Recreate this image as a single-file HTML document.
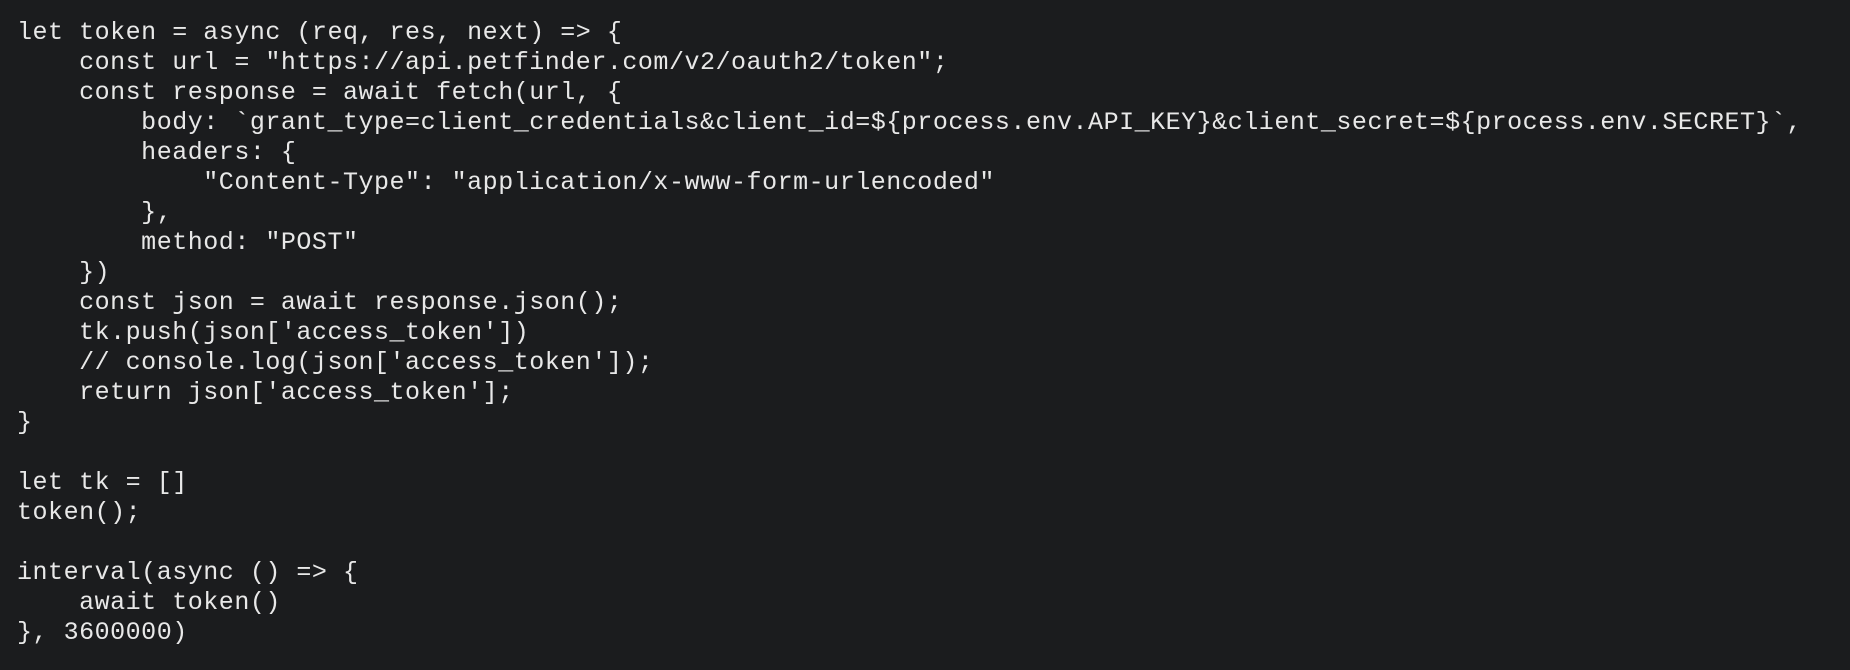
<!DOCTYPE html>
<html><head><meta charset="utf-8"><style>
html,body{margin:0;padding:0;background:#1b1c1e;width:1850px;height:670px;overflow:hidden}
pre{margin:0;padding:18px 0 0 17px;font-family:"Liberation Mono",monospace;font-size:25px;letter-spacing:0.52px;line-height:30px;color:#e8e8e8}
</style></head><body><pre>let token = async (req, res, next) =&gt; {
    const url = "https://api.petfinder.com/v2/oauth2/token";
    const response = await fetch(url, {
        body: `grant_type=client_credentials&amp;client_id=${process.env.API_KEY}&amp;client_secret=${process.env.SECRET}`,
        headers: {
            "Content-Type": "application/x-www-form-urlencoded"
        },
        method: "POST"
    })
    const json = await response.json();
    tk.push(json['access_token'])
    // console.log(json['access_token']);
    return json['access_token'];
}

let tk = []
token();

interval(async () =&gt; {
    await token()
}, 3600000)</pre></body></html>
